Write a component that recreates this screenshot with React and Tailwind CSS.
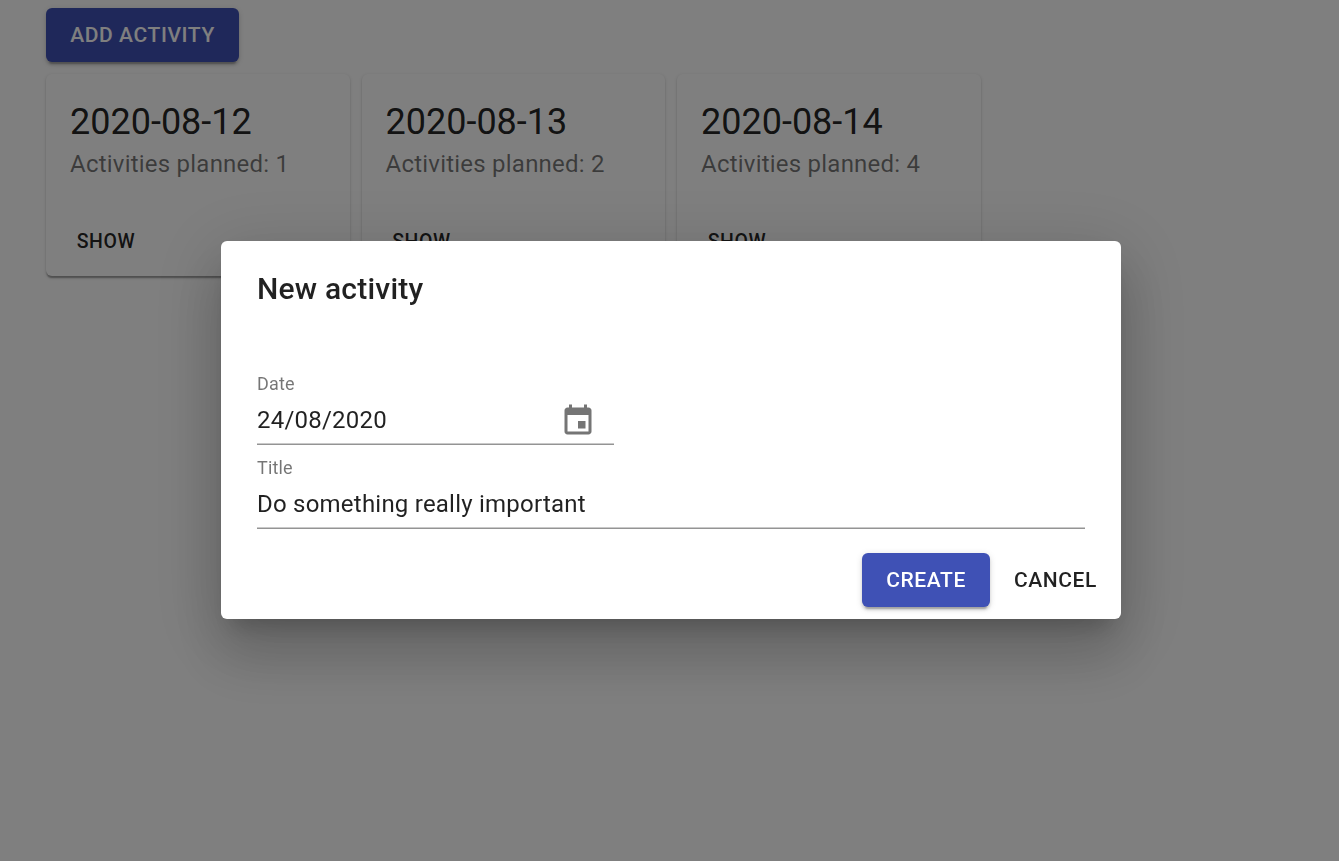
const days = [
  { date: '2020-08-12', planned: 1 },
  { date: '2020-08-13', planned: 2 },
  { date: '2020-08-14', planned: 4 },
];

const raised =
  'shadow-[0_4.5px_1.5px_-3px_rgba(0,0,0,0.2),0_3px_3px_0_rgba(0,0,0,0.14),0_1.5px_7.5px_0_rgba(0,0,0,0.12)]';

function PrimaryButton({ children, className }) {
  return (
    <button
      className={`flex h-[54px] items-center justify-center rounded-md bg-[#3f51b5] pt-0.5 text-[21px] font-medium tracking-[0.6px] text-white uppercase ${raised} ${className}`}
    >
      {children}
    </button>
  );
}

function DayCard({ date, planned }) {
  return (
    <article className="h-[202px] w-[303.5px] rounded-md bg-white shadow-[0_3px_1.5px_-1.5px_rgba(0,0,0,0.2),0_1.5px_1.5px_0_rgba(0,0,0,0.14),0_1.5px_4.5px_0_rgba(0,0,0,0.12)]">
      <div className="p-6">
        <h2 className="text-[36px] leading-[48px]">{date}</h2>
        <p className="text-2xl leading-9 tracking-[0.225px] text-black/54">Activities planned: {planned}</p>
      </div>
      <div className="p-3">
        <button className="flex h-[46px] w-24 items-center justify-center pt-0.5 text-[19.5px] font-medium tracking-[0.55px] uppercase">
          Show
        </button>
      </div>
    </article>
  );
}

function Field({ label, value, className, children }) {
  return (
    <div className={className}>
      <div className="h-6 text-lg leading-[22px] tracking-[0.17px] text-black/54">{label}</div>
      <div className="flex h-[46px] items-center justify-between text-2xl tracking-[0.225px]">
        <span>{value}</span>
        {children}
      </div>
      <div className="h-px bg-[#c9c9c9]" />
      <div className="h-px bg-[#949494]" />
    </div>
  );
}

function CalendarIcon() {
  return (
    <svg viewBox="0 0 24 24" className="mt-0.5 mr-[18.5px] size-9 fill-[#757575]">
      <path d="M17 12h-5v5h5v-5zM16 1v2H8V1H6v2H5c-1.11 0-1.99.9-1.99 2L3 19c0 1.1.89 2 2 2h14c1.1 0 2-.9 2-2V5c0-1.1-.9-2-2-2h-1V1h-2zm3 18H5V8h14v11z" />
    </svg>
  );
}

export default function App() {
  return (
    <div className="h-screen overflow-hidden bg-white font-[Roboto,sans-serif] text-black/87">
      <main className="flex flex-col items-start gap-3 pt-2 pl-[46px]">
        <PrimaryButton className="w-[193px]">Add activity</PrimaryButton>
        <div className="flex gap-3">
          {days.map((day) => (
            <DayCard key={day.date} {...day} />
          ))}
        </div>
      </main>
      <div className="fixed inset-0 flex items-start bg-black/50 pt-[241px] pl-[221px]">
        <section
          role="dialog"
          className="h-[378px] w-[900px] rounded-md bg-white shadow-[0_16.5px_22.5px_-10.5px_rgba(0,0,0,0.2),0_36px_57px_4.5px_rgba(0,0,0,0.14),0_13.5px_69px_12px_rgba(0,0,0,0.12)]"
        >
          <h1 className="px-9 pt-6 text-[30px] leading-[48px] font-medium tracking-[0.225px]">New activity</h1>
          <div className="flex flex-col gap-3 px-9 pt-15">
            <Field label="Date" value="24/08/2020" className="w-[357px]">
              <CalendarIcon />
            </Field>
            <Field label="Title" value="Do something really important" />
          </div>
          <div className="flex justify-end gap-3 px-3 pt-6">
            <PrimaryButton className="w-32">Create</PrimaryButton>
            <button className="flex h-[54px] w-[107px] items-center justify-center pt-0.5 text-[21px] font-medium tracking-[0.6px] uppercase">
              Cancel
            </button>
          </div>
        </section>
      </div>
    </div>
  );
}
